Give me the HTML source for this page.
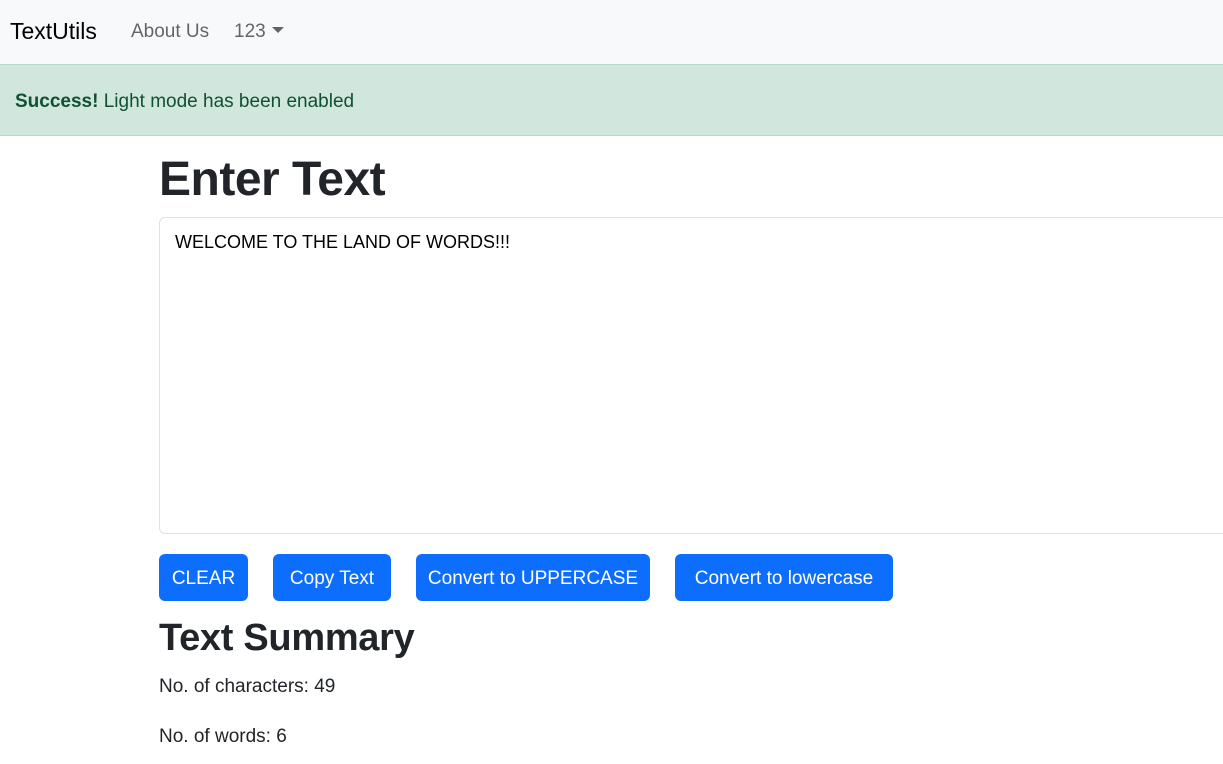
<!DOCTYPE html>
<html><head><meta charset="utf-8"><style>
*{box-sizing:border-box;margin:0;padding:0}
body{width:1223px;height:764px;overflow:hidden;background:#fff;font-family:"Liberation Sans",sans-serif;color:#212529}
.nav{position:absolute;left:0;top:0;width:1223px;height:64px;background:#f8f9fa}
.brand{position:absolute;left:10px;top:18px;font-size:23px;color:#000}
.nl{position:absolute;top:21px;font-size:19px;color:rgba(0,0,0,.6)}
.caret{display:inline-block;width:0;height:0;border-left:6px solid transparent;border-right:6px solid transparent;border-top:6px solid rgba(0,0,0,.6);vertical-align:4px;margin-left:6px}
.alert{position:absolute;left:0;top:64px;width:1223px;height:72px;background:#d1e7dd;border-top:1px solid #badbcc;border-bottom:1px solid #badbcc;color:#0f5132;font-size:19px;padding:26px 15px}
h1{position:absolute;left:159px;top:152px;font-size:48px;font-weight:bold;letter-spacing:-0.5px}
.ta{position:absolute;left:159px;top:217px;width:1080px;height:317px;border:1px solid #dee2e6;border-radius:6px;padding:14px 15px;font-size:18px;color:#000}
.btn{position:absolute;top:554px;height:47px;background:#0d6efd;color:#fff;border-radius:6px;font-size:19px;line-height:49px;text-align:center}
h2{position:absolute;left:159px;top:617px;font-size:38px;font-weight:bold;letter-spacing:-0.3px}
.p{position:absolute;left:159px;font-size:19px}
</style></head><body>
<div class="nav"><div class="brand">TextUtils</div><div class="nl" style="left:131px">About Us</div><div class="nl" style="left:234px">123<span class="caret"></span></div></div>
<div class="alert"><b>Success!</b> Light mode has been enabled</div>
<h1>Enter Text</h1>
<div class="ta">WELCOME TO THE LAND OF WORDS!!!</div>
<div class="btn" style="left:159px;width:89px">CLEAR</div>
<div class="btn" style="left:273px;width:118px">Copy Text</div>
<div class="btn" style="left:416px;width:234px">Convert to UPPERCASE</div>
<div class="btn" style="left:675px;width:218px">Convert to lowercase</div>
<h2>Text Summary</h2>
<div class="p" style="top:676px">No. of characters: 49</div>
<div class="p" style="top:726px">No. of words: 6</div>
</body></html>
